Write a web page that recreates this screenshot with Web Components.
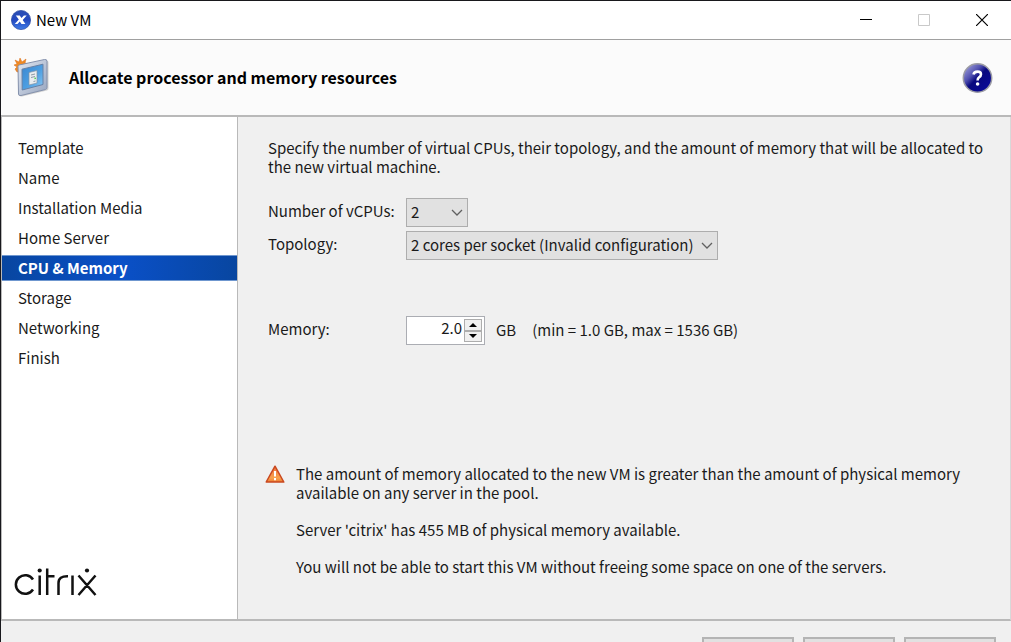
<!DOCTYPE html>
<html lang="en">
<head>
<meta charset="utf-8">
<title>New VM</title>
<style>
  body { margin: 0; background: #f0f0f0; color: #1a1a1a; font: 15px/19px "Noto Sans CJK KR", "Noto Sans", sans-serif; }
</style>
</head>
<body>
<vm-window>
  <title-bar slot="title">New VM</title-bar>
  <wizard-header slot="header">Allocate processor and memory resources</wizard-header>
  <wizard-nav slot="nav">
    <wizard-step>Template</wizard-step>
    <wizard-step>Name</wizard-step>
    <wizard-step>Installation Media</wizard-step>
    <wizard-step>Home Server</wizard-step>
    <wizard-step current>CPU &amp; Memory</wizard-step>
    <wizard-step>Storage</wizard-step>
    <wizard-step>Networking</wizard-step>
    <wizard-step>Finish</wizard-step>
  </wizard-nav>
  <resource-form>Specify the number of virtual CPUs, their topology, and the amount of memory that will be allocated to the new virtual machine.</resource-form>
  <warning-note>
    <p>The amount of memory allocated to the new VM is greater than the amount of physical memory available on any server in the pool.</p>
    <p>Server 'citrix' has 455 MB of physical memory available.</p>
    <p>You will not be able to start this VM without freeing some space on one of the servers.</p>
  </warning-note>
  <wizard-footer slot="footer"></wizard-footer>
</vm-window>

<script>
const define = (name, html) => {
  customElements.define(name, class extends HTMLElement {
    constructor() {
      super();
      const t = document.createElement('template');
      t.innerHTML = html;
      this.attachShadow({ mode: 'open' }).append(t.content.cloneNode(true));
    }
  });
};

define('vm-window', `
<style>
  :host { display: grid; grid-template-rows: auto auto 1fr auto; min-height: 100vh; box-sizing: border-box;
    border-top: 1px solid #18181c; border-left: 1px solid #18181c; }
  .body { display: grid; grid-template-columns: 237px 1fr; border: solid #b9b9b9; border-width: 0 1px 2px 0; border-right-color: #d8d8d8; }
  main { display: flex; flex-direction: column; gap: 115px; padding: 21px 24px 20px 27px; }
</style>
<slot name="title"></slot>
<slot name="header"></slot>
<div class="body">
  <slot name="nav"></slot>
  <main><slot></slot></main>
</div>
<slot name="footer"></slot>`);

define('title-bar', `
<style>
  :host { display: flex; align-items: center; height: 38px; padding-left: 10px; background: #fff; color: #000; }
  .logo { margin-right: 5px; }
  .name { flex: 1; padding-bottom: 2px; }
  button { width: 58px; height: 38px; padding: 0; border: 0; background: none; display: grid; place-items: center; }
</style>
<svg class="logo" width="20" height="20" viewBox="0 0 20 20" aria-hidden="true">
  <defs><linearGradient id="b" x1="0" y1="0" x2="0" y2="1"><stop offset="0" stop-color="#2c4fb4"/><stop offset=".5" stop-color="#2449c0"/><stop offset="1" stop-color="#3f7ce8"/></linearGradient></defs>
  <circle cx="10" cy="10" r="9.6" fill="url(#b)" stroke="#2545a0" stroke-width=".7"/>
  <path d="M4.800 5.600h3.900l1.800 2.400 2.400-2.400h2.800l-4 4.400 2.700 3.900h-3.900l-1.700-2.300-2.300 2.300H3.800l4-4.400z" fill="#fff"/>
</svg>
<span class="name"><slot></slot></span>
<button aria-label="Minimize"><svg width="12" height="12"><path d="M0 5.5h12" stroke="#000"/></svg></button>
<button aria-label="Maximize" disabled><svg width="12" height="12"><path d="M.5.5h11v11H.5z" fill="none" stroke="#c9c9c9"/></svg></button>
<button aria-label="Close"><svg width="12" height="12"><path d="M0 0l12 12M12 0L0 12" stroke="#000" stroke-width="1.2"/></svg></button>`);

define('wizard-header', `
<style>
  :host { display: flex; align-items: center; height: 75px; padding: 0 18px 0 12px; background: #fbfbfb;
    border: solid #b9b9b9; border-width: 1px 0 2px 0; border-top-color: #a0a0a0; }
  h1 { flex: 1; margin: 0 0 0 20px; font-size: 16px; font-weight: bold; color: #000; }
  button { width: 32px; height: 32px; padding: 0; border: 0; background: none; }
  svg { display: block; }
</style>
<svg width="36" height="40" viewBox="0 0 36 40" aria-hidden="true">
  <defs>
    <linearGradient id="f" x1="0" y1="0" x2="1" y2="1"><stop offset="0" stop-color="#e2e8f2"/><stop offset="1" stop-color="#97a5bf"/></linearGradient>
    <linearGradient id="s" x1="0" y1="0" x2="1" y2="1"><stop offset="0" stop-color="#3a86cf"/><stop offset=".55" stop-color="#4d9fe2"/><stop offset="1" stop-color="#8cc9f3"/></linearGradient>
  </defs>
  <path d="M2 2l4 2 1-4 2 4 4-3-1 4 3 1-3 3 1 5-9 0-2-3 2-2-3-2 3-1z" fill="#f08a24" stroke="#d96b14" stroke-width=".5"/>
  <path d="M6 9.5Q6 8 7.500 7.700L33 2.500Q35.500 2 35.500 4.500V30.500Q35.500 32 34 32.500L9 38.500Q6.500 39 6.500 37z" fill="#b8b8b8" opacity=".6"/>
  <path d="M5 8.500Q5 7.200 6.500 6.900L31.500 1.500Q34 1 34 3.500V29.500Q34 31 32.500 31.500L8 37.500Q5.500 38 5.500 36z" fill="url(#f)" stroke="#8491ac"/>
  <path d="M9 11.200L30 6.200V26.500L9.200 32z" fill="url(#s)" stroke="#6580a6"/>
  <path d="M16 14.500l8-2v12.500l-8 2z" fill="#e9edf0" stroke="#8394a5" stroke-width=".7"/>
  <path d="M18 17l4-1M18 19.500l4-1M20.500 23.500l2-.5" stroke="#8e9aa4"/>
  <path d="M21.500 20.500l1.300-.3" stroke="#3ccc42" stroke-width="1.500"/>
</svg>
<h1><slot></slot></h1>
<button aria-label="Help"><svg width="32" height="32" viewBox="0 0 32 32">
  <defs>
    <linearGradient id="h" x1="0" y1="0" x2="1" y2="1"><stop offset="0" stop-color="#b4b4e4"/><stop offset=".35" stop-color="#5050b0"/><stop offset=".5" stop-color="#08087e"/><stop offset="1" stop-color="#0a0aa0"/></linearGradient>
  </defs>
  <circle cx="16.500" cy="16" r="14.200" fill="url(#h)" stroke="#9b9ba4" stroke-width="1.500"/>
  <path d="M12.500 12.500Q13 9.600 16.600 9.600Q20 9.600 20 12.300Q20 14.200 18 15.300Q16.600 16.200 16.600 18.600" fill="none" stroke="#fff" stroke-width="2.600"/>
  <circle cx="16.600" cy="22" r="1.800" fill="#fff"/>
</svg></button>`);

define('wizard-nav', `
<style>
  :host { display: flex; flex-direction: column; justify-content: space-between; background: #fff;
    border: solid #b9b9b9; border-width: 0 1px 0 1px; }
  nav { display: flex; flex-direction: column; gap: 4px; padding-top: 18px; }
  svg { display: block; margin: 0 0 21px 11px; }
</style>
<nav aria-label="Steps"><slot></slot></nav>
<svg width="84" height="32" viewBox="0 0 84 32" role="img" aria-label="Citrix" fill="none" stroke="#111" stroke-width="2.500">
  <path d="M20 13.500A9.300 9.300 0 1 0 20 23.500M26.700 9.500V29M34.200 2.500V29M34.200 10.200H41.500M45.500 29V17Q45.500 10 55 10.300M59.500 9.500V29M65.500 9.500L82.500 29M82.500 9.500L65.500 29"/>
  <g fill="#111" stroke="none"><circle cx="26.700" cy="4.500" r="2.100"/><circle cx="74" cy="4.500" r="2.100"/></g>
</svg>`);

define('wizard-step', `
<style>
  :host { display: block; }
  a { display: block; height: 26px; line-height: 26px; padding-left: 16px; color: inherit; text-decoration: none; }
  :host([current]) a { box-sizing: border-box; line-height: 24px; border: solid #6f97cf; border-width: 1px 0; color: #fff; font-weight: bold;
    background: linear-gradient(90deg, #0846a0, #0a50c8 50%, #0846a0); }
</style>
<a href="#"><slot></slot></a>`);

define('resource-form', `
<style>
  :host { display: block; margin-left: 3px; }
  p { margin: 0 0 22px; }
  .row { display: grid; grid-template-columns: 138px 1fr; align-items: center; margin-bottom: 4px; }
  label { line-height: 25px; height: 29px; }
  .field { position: relative; display: flex; width: max-content; }
  select { appearance: none; width: 62px; height: 29px; padding: 0 4px 2px; border: 1px solid #adadad; border-radius: 0; background: #e1e1e1; color: inherit; font: inherit; line-height: 25px; }
  select.wide { width: 312px; }
  .field > svg { position: absolute; right: 5px; top: 11px; pointer-events: none; }
  .memory { margin-top: 56px; }
  .value { display: flex; align-items: center; }
  .spin { display: flex; width: 79px; height: 29px; box-sizing: border-box; border: 1px solid #abadb3; background: #fff; padding: 1px; }
  input { flex: 1; min-width: 0; padding: 0 1px 6px 0; border: 0; background: none; color: inherit; font: inherit; text-align: right; }
  .arrows { display: grid; grid-template-rows: 1fr 1fr; width: 18px; padding: 1px; }
  .arrows button { display: grid; place-items: center; padding: 0; border: 1px solid #adadad; background: #f0f0f0; }
  .unit { margin: 0 16px 0 11px; }
  .unit, .range { padding-bottom: 2px; }
</style>
<p><slot></slot></p>
<div class="row"><label for="cpus">Number of vCPUs:</label>
  <span class="field"><select id="cpus"><option>2</option></select>
  <svg width="12" height="8"><path d="M1 1l5 5 5-5" fill="none" stroke="#606060" stroke-width="1.300"/></svg></span></div>
<div class="row"><label for="topology">Topology:</label>
  <span class="field"><select id="topology" class="wide"><option>2 cores per socket (Invalid configuration)</option></select>
  <svg width="12" height="8"><path d="M1 1l5 5 5-5" fill="none" stroke="#606060" stroke-width="1.300"/></svg></span></div>
<div class="row memory"><label for="memory">Memory:</label>
  <span class="value"><span class="spin"><input id="memory" type="text" inputmode="decimal" value="2.0">
    <span class="arrows"><button aria-label="Increase"><svg width="8" height="4"><path d="M0 4l4-4 4 4z"/></svg></button><button aria-label="Decrease"><svg width="8" height="4"><path d="M0 0l4 4 4-4z"/></svg></button></span></span>
  <span class="unit">GB</span><span class="range">(min = 1.0 GB, max = 1536 GB)</span></span></div>`);

define('warning-note', `
<style>
  :host { display: grid; grid-template-columns: 20px 1fr; gap: 11px; }
  .text { display: grid; align-content: start; gap: 18px; }
  ::slotted(p) { margin: 0; }
</style>
<svg width="20" height="20" viewBox="0 0 20 20" role="img" aria-label="Warning">
  <defs><linearGradient id="w" x1="0" y1="0" x2="0" y2="1"><stop offset="0" stop-color="#f0703c"/><stop offset=".75" stop-color="#f8a24c"/><stop offset="1" stop-color="#ee7c32"/></linearGradient></defs>
  <path d="M10 2.200L18.800 18H1.200z" fill="url(#w)" stroke="#c9481f" stroke-width="1.500" stroke-linejoin="round"/>
  <path d="M10 7v5.500M10 14v2.200" stroke="#fff" stroke-width="2"/>
</svg>
<div class="text"><slot></slot></div>`);

define('wizard-footer', `
<style>
  :host { display: flex; justify-content: flex-end; gap: 9px; height: 21px; overflow: hidden; padding-right: 15px; }
  button { flex: none; margin-top: 16px; width: 92px; height: 29px; border: 2px solid #b4b4b4; background: #e1e1e1; }
</style>
<button aria-label="Previous"></button><button aria-label="Next"></button><button aria-label="Cancel"></button>`);
</script>
</body>
</html>
